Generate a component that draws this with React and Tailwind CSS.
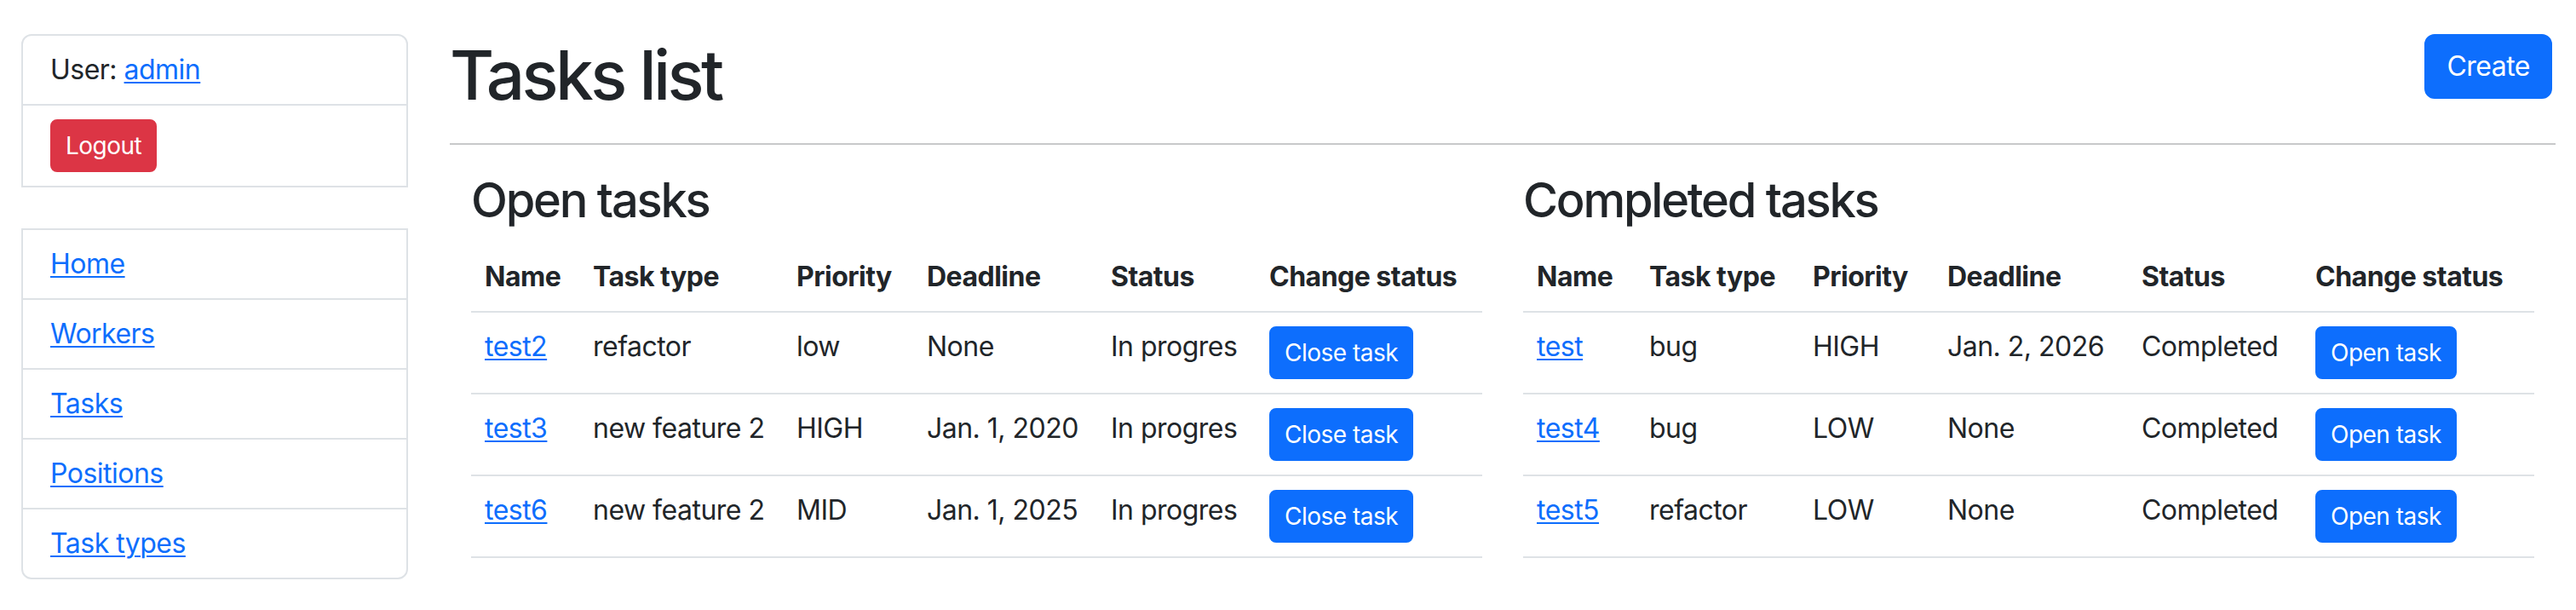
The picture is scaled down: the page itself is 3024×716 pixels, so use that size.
const openTasks = [
  { name: 'test2', type: 'refactor', priority: 'low', deadline: 'None', status: 'In progres' },
  { name: 'test3', type: 'new feature 2', priority: 'HIGH', deadline: 'Jan. 1, 2020', status: 'In progres' },
  { name: 'test6', type: 'new feature 2', priority: 'MID', deadline: 'Jan. 1, 2025', status: 'In progres' },
];

const completedTasks = [
  { name: 'test', type: 'bug', priority: 'HIGH', deadline: 'Jan. 2, 2026', status: 'Completed' },
  { name: 'test4', type: 'bug', priority: 'LOW', deadline: 'None', status: 'Completed' },
  { name: 'test5', type: 'refactor', priority: 'LOW', deadline: 'None', status: 'Completed' },
];

const navLinks = ['Home', 'Workers', 'Tasks', 'Positions', 'Task types'];

const linkCls = 'text-[#0d6efd] underline decoration-2 underline-offset-[3px]';
const cellCls = 'px-[16px] py-[16px] align-top border-b-2 border-[#dee2e6] text-left';

const TaskTable = ({ title, tasks, widths, action }) => (
  <section className="w-[1187px]">
    <h3 className="text-[56px] leading-[67px] font-medium tracking-[-0.04em] mb-[16px]">{title}</h3>
    <table className="w-full table-fixed border-collapse">
      <colgroup>
        {widths.map((w, i) => (
          <col key={i} style={{ width: w }} />
        ))}
      </colgroup>
      <thead>
        <tr>
          {['Name', 'Task type', 'Priority', 'Deadline', 'Status', 'Change status'].map((h) => (
            <th key={h} className={`${cellCls} font-bold whitespace-nowrap`}>
              {h}
            </th>
          ))}
        </tr>
      </thead>
      <tbody>
        {tasks.map((t) => (
          <tr key={t.name}>
            <td className={cellCls}>
              <a href="#" className={linkCls}>{t.name}</a>
            </td>
            <td className={`${cellCls} whitespace-nowrap`}>{t.type}</td>
            <td className={cellCls}>{t.priority}</td>
            <td className={`${cellCls} whitespace-nowrap`}>{t.deadline}</td>
            <td className={`${cellCls} whitespace-nowrap`}>{t.status}</td>
            <td className={cellCls}>
              <button className="bg-[#0d6efd] text-white text-[28px] leading-[42px] px-[16px] py-[8px] border-2 border-[#0d6efd] rounded-[8px] whitespace-nowrap">
                {action}
              </button>
            </td>
          </tr>
        ))}
      </tbody>
    </table>
  </section>
);

export default function App() {
  return (
    <div className="flex bg-white min-h-[716px] pt-[40px] pl-[25px] font-['Inter',sans-serif] text-[32px] leading-[48px] tracking-[-0.016em] text-[#212529]">
      <aside className="w-[454px] shrink-0">
        <div className="border-2 border-[#dee2e6] rounded-t-[12px]">
          <div className="px-[32px] py-[16px] border-b-2 border-[#dee2e6]">
            User: <a href="#" className={linkCls}>admin</a>
          </div>
          <div className="px-[32px] py-[16px]">
            <button className="bg-[#dc3545] text-white text-[28px] leading-[42px] px-[16px] py-[8px] border-2 border-[#dc3545] rounded-[8px]">
              Logout
            </button>
          </div>
        </div>

        <div className="mt-[48px] border-2 border-[#dee2e6] rounded-b-[12px]">
          {navLinks.map((l, i) => (
            <div
              key={l}
              className={`px-[32px] py-[16px] ${i < navLinks.length - 1 ? 'border-b-2 border-[#dee2e6]' : ''}`}
            >
              <a href="#" className={linkCls}>{l}</a>
            </div>
          ))}
        </div>
      </aside>

      <main className="ml-[49px] w-[2472px] shrink-0">
        <div className="flex justify-between items-start">
          <h1 className="text-[80px] leading-[96px] font-medium tracking-[-0.045em]">Tasks list</h1>
          <button className="mr-[4px] bg-[#0d6efd] text-white px-[24px] py-[12px] border-2 border-[#0d6efd] rounded-[12px]">
            Create
          </button>
        </div>
        <hr className="mt-[32px] border-0 border-t-2 border-[#c8c9ca]" />

        <div className="flex gap-[48px] px-[25px] mt-[32px]">
          <TaskTable
            title="Open tasks"
            tasks={openTasks}
            widths={['127px', '239px', '153px', '216px', '186px', '266px']}
            action="Close task"
          />
          <TaskTable
            title="Completed tasks"
            tasks={completedTasks}
            widths={['132px', '192px', '158px', '228px', '204px', '273px']}
            action="Open task"
          />
        </div>
      </main>
    </div>
  );
}
